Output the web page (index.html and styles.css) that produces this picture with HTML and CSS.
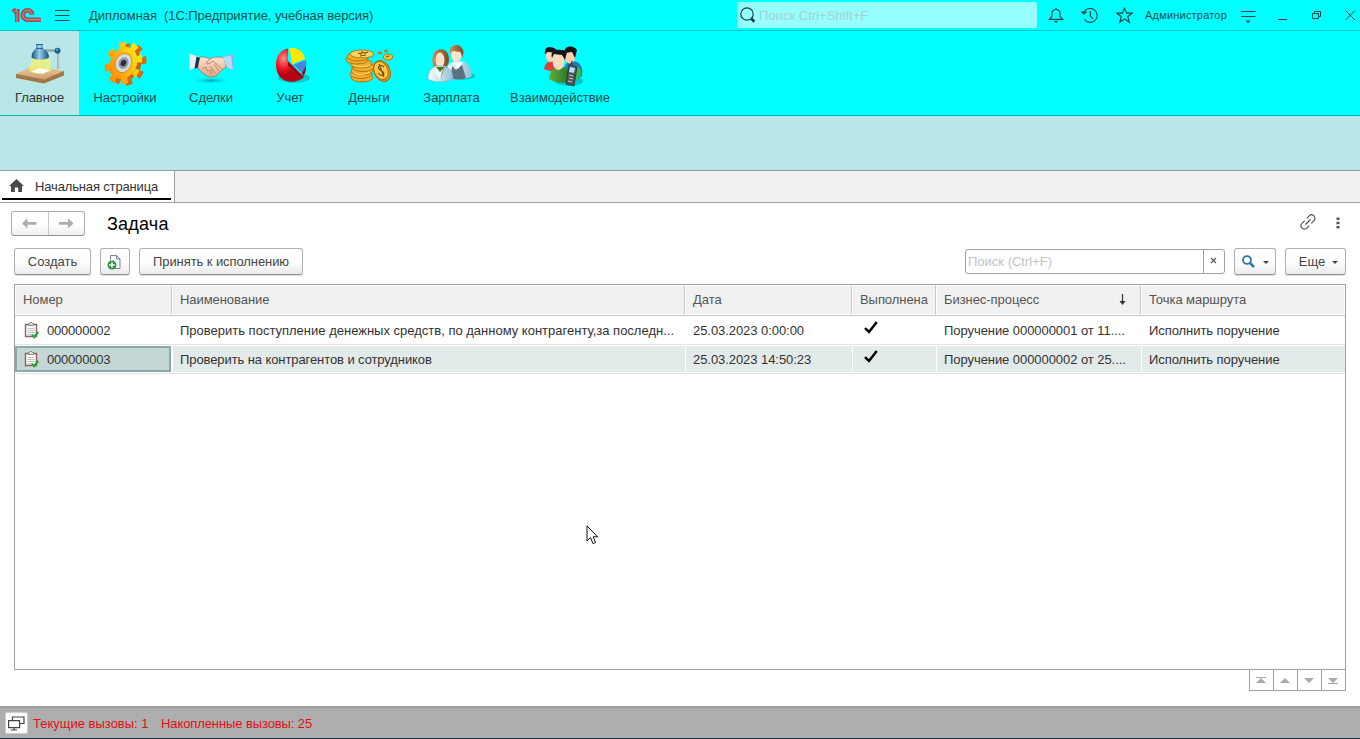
FILE: index.html
```html
<!DOCTYPE html>
<html lang="ru">
<head>
<meta charset="utf-8">
<title>Дипломная</title>
<link rel="stylesheet" href="styles.css">
</head>
<body>
<div class="app">
  <header class="titlebar">
    <svg class="logo" width="30" height="15" viewBox="0 0 30 15" fill="none">
      <g stroke="#b8464f" stroke-width="4.600"><path d="M.8 4 4.300 1.800M5.200 1V14"/><path d="M20.200 6.800A4.700 4.700 0 1 0 15.600 11.700H29"/></g>
      <g stroke="#6fc9c9" stroke-width=".8"><path d="M1.500 4.500 5 2V14"/><path d="M20.200 6.800A4.700 4.700 0 1 0 15.600 11.700H29"/></g>
    </svg>
    <svg class="burger" width="15" height="13" viewBox="0 0 15 13" stroke="#174b4b"><path d="M0 1.500h14.500M0 6.500h14.500M0 11.500h14.500"/></svg>
    <span class="app-title">Дипломная&nbsp; (1С:Предприятие, учебная версия)</span>
    <div class="global-search">
      <svg width="17" height="17" viewBox="0 0 17 17" fill="none" stroke="#173f3f"><circle cx="7" cy="7" r="6.200" stroke-width="1.200"/><path d="m11.200 11.500 3.200 3.200" stroke-width="2.800"/></svg>
      <span class="global-hint">Поиск Ctrl+Shift+F</span>
    </div>
    <svg class="t-bell" width="16" height="17" viewBox="0 0 16 17" fill="none" stroke="#174b4b" stroke-width="1.200"><path d="M8 1v1.500M1.400 12.300h13.200L12 9.200V6.500C12 3.900 10.300 2.500 8 2.500S4 3.900 4 6.500v2.700z"/><path d="M5.500 13.800h5L8 16z" fill="#174b4b" stroke="none"/></svg>
    <svg class="t-history" width="18" height="17" viewBox="0 0 18 17" fill="none" stroke="#174b4b" stroke-width="1.200"><path d="M2.600 6A7 7 0 1 1 3.400 12.300M9.300 4v5l2.700 2.800"/><path d="M1 5 2.800 7.200 5 5.200z" fill="#174b4b"/></svg>
    <svg class="t-star" width="17" height="17" viewBox="0 0 17 17" fill="none" stroke="#174b4b" stroke-width="1.200"><path d="m8.500 1.200 2.100 5h5.400l-4.300 3.500 1.700 5.600-4.900-3.300-4.900 3.300 1.700-5.600L1 6.200h5.400z"/></svg>
    <span class="user">Администратор</span>
    <svg class="t-menu" width="15" height="14" viewBox="0 0 15 14"><path d="M0 1.500h14.500M0 6.500h14.500" stroke="#174b4b"/><path d="M4.500 10.500h5L7 13.200z" fill="#174b4b"/></svg>
    <svg class="t-min" width="9" height="11" viewBox="0 0 9 11"><path d="M0 9.500h9" stroke="#174b4b"/></svg>
    <svg class="t-max" width="10" height="10" viewBox="0 0 10 10" fill="none" stroke="#174b4b"><path d="M.5 3.500h6v5h-6zM2.500 3.500v-2h6v5h-2"/></svg>
    <svg class="t-close" width="11" height="11" viewBox="0 0 11 11" fill="none" stroke="#174b4b"><path d="m.5.5 9.500 9.500M10 .5.500 10"/></svg>
  </header>

  <nav class="sections">
    <div class="section s-main">
      <svg width="48" height="48" viewBox="0 0 48 48">
        <defs>
          <linearGradient id="wood" x2="0" y2="1"><stop offset="0" stop-color="#e9cba0"/><stop offset="1" stop-color="#cf9f6b"/></linearGradient>
          <linearGradient id="shade"><stop offset="0" stop-color="#11507f"/><stop offset=".45" stop-color="#9cd0ea"/><stop offset="1" stop-color="#0f4d7c"/></linearGradient>
        </defs>
        <path d="M0 33v4l28 5.500 20-8v-4.500z" fill="#a37547"/>
        <path d="M0 33 17 25l31 5-20 8.500z" fill="url(#wood)"/>
        <path d="M16 17h18l1 13-14 3-8-3z" fill="#f7f26a" opacity=".7"/>
        <path d="m15 31 8-4 11 2-7 4z" fill="#fffff0"/>
        <path d="M42.500 11v17M28 9.500h13" stroke="#8ca5b0" stroke-width="2.400"/>
        <path d="M43 11v17" stroke="#fff" stroke-width=".8"/>
        <circle cx="41.500" cy="9.700" r="3" fill="#186596"/><circle cx="40.800" cy="8.800" r="1" fill="#72b6d9"/>
        <path d="M20 3.500h7v4c4 2 6 5 6 9-4 3-14 3-17.500 0 0-4 1.500-7 4.500-9z" fill="url(#shade)"/>
        <path d="M20 3.500h7M20 7.500h7" stroke="#276a94"/>
      </svg>
      <span>Главное</span>
    </div>
    <div class="section s-setup">
      <svg width="48" height="48" viewBox="0 0 48 48">
        <defs><linearGradient id="gear" x1="0" y1="1" x2=".7" y2="0"><stop offset="0" stop-color="#ff8300"/><stop offset=".5" stop-color="#ffad15"/><stop offset="1" stop-color="#ffe60a"/></linearGradient></defs>
        <g transform="translate(27 23.500) rotate(25) scale(.8 1)">
          <circle r="16" fill="#c96205"/><circle r="18" fill="none" stroke="#d96a05" stroke-width="8" pathLength="16" stroke-dasharray="1 1"/>
        </g>
        <g transform="translate(22.500 22) rotate(25) scale(.8 1)">
          <circle r="16.500" fill="url(#gear)"/><circle r="18.300" fill="none" stroke="url(#gear)" stroke-width="8" pathLength="16" stroke-dasharray="1 1"/>
          <circle r="10" fill="#d6d9de" stroke="#dd9220" stroke-width="1.300"/><circle r="6" fill="#929aa1"/><circle r="3.300" fill="#252f36"/>
        </g>
      </svg>
      <span>Настройки</span>
    </div>
    <div class="section s-deals">
      <svg width="48" height="48" viewBox="0 0 48 48">
        <defs>
          <linearGradient id="skin" x2="0" y2="1"><stop offset="0" stop-color="#ffe5d2"/><stop offset="1" stop-color="#dfa580"/></linearGradient>
          <radialGradient id="drop"><stop offset="0" stop-color="#007f91" stop-opacity=".7"/><stop offset="1" stop-color="#00d8df" stop-opacity="0"/></radialGradient>
        </defs>
        <ellipse cx="24" cy="39.500" rx="19" ry="3.500" fill="url(#drop)"/>
        <path d="M11 17c4-2 8-1 12 1 5-3 10-2 15-1l1 9-3 2-6 6c-5 4-11 1-13-1l-6-6z" fill="url(#skin)" stroke="#a8694f" stroke-width=".7"/>
        <path d="m23 18-4 4c1 2 5 0 7-2l9 8M27 23l5 7M23 25l5 7M15 28l4-2 1 4 4-1v4" fill="none" stroke="#af7156" stroke-width=".8"/>
        <path d="M2.500 12.500 12 16l-2 10-7.500 3z" fill="#e5eff5"/><path d="M9.500 15.500 13 17l-2.500 10-3 .500z" fill="#17384a"/>
        <path d="M46 12.500 36 16l3 10 7 3.500z" fill="#82b5e5"/><path d="m36 16 4 10 6 3-2-15z" fill="#b8d8f6"/>
      </svg>
      <span>Сделки</span>
    </div>
    <div class="section s-account">
      <svg width="48" height="48" viewBox="0 0 48 48">
        <defs><radialGradient id="redpie" cx=".3" cy=".3"><stop offset="0" stop-color="#ff8d84"/><stop offset=".6" stop-color="#f01725"/><stop offset="1" stop-color="#b70010"/></radialGradient></defs>
        <ellipse cx="28" cy="37" rx="16" ry="5" fill="#008b91" opacity=".45"/>
        <path d="M22 7.500V25l13 13c-9 6-25 3-25-14 0-9 5-15.500 12-16.500z" fill="url(#redpie)"/>
        <path d="M22 25v-5l16 16-3 2.500z" fill="#a30010"/>
        <path d="M23.500 7C31 5.500 38 11 39 18L26 23z" fill="#ffe800"/>
        <path d="m27.500 23.500 12.500-4.500c1 6 0 9-4 13z" fill="#4388dd"/><path d="m36 32 4-7c0 6-1 8-3 10z" fill="#a30014"/>
      </svg>
      <span>Учет</span>
    </div>
    <div class="section s-money">
      <svg width="48" height="48" viewBox="0 0 48 48">
        <g fill="#f5ae28" stroke="#a86c12" stroke-width=".9">
          <ellipse cx="17" cy="36.500" rx="11" ry="4.500"/><ellipse cx="16" cy="33" rx="11" ry="4.500"/><ellipse cx="17" cy="29.500" rx="11" ry="4.500"/><ellipse cx="18" cy="26" rx="11" ry="4.500"/><ellipse cx="16" cy="22.500" rx="11" ry="4.500"/><ellipse cx="12" cy="18.500" rx="11" ry="4.500"/><ellipse cx="13" cy="15.500" rx="11" ry="4.500"/><ellipse cx="17" cy="13" rx="12" ry="4" fill="#ffd45c"/>
          <ellipse cx="37" cy="30" rx="8" ry="11" transform="rotate(-25 37 30)" fill="#de911a"/><ellipse cx="36" cy="29.500" rx="6.700" ry="9.400" transform="rotate(-25 36 29.500)" fill="#ffc944"/>
          <ellipse cx="43" cy="16" rx="4.500" ry="3" fill="#ffc13a"/><ellipse cx="35" cy="12" rx="2" ry="1"/><ellipse cx="41" cy="10" rx="1.500" ry="1"/>
        </g>
        <path d="M39 26c-3-3-7-1-5 2l4 3c3 3-2 5-5 1M34 23l5 13M13 12l3 1 1-2 3 1 3-1m-8 4 6-1M41 16l3-1" fill="none" stroke="#795009" stroke-width="1.200"/>
        <path d="M9 24c5 3 11 2 16 0M8 31c5 4 11 3 17 0" fill="none" stroke="#ffe276"/>
      </svg>
      <span>Деньги</span>
    </div>
    <div class="section s-pay">
      <svg width="48" height="48" viewBox="0 0 48 48">
        <defs>
          <linearGradient id="coat"><stop offset="0" stop-color="#f7fcff"/><stop offset="1" stop-color="#91bfd5"/></linearGradient>
          <linearGradient id="hair"><stop offset="0" stop-color="#c98f55"/><stop offset="1" stop-color="#7c4925"/></linearGradient>
        </defs>
        <ellipse cx="31" cy="35" rx="16" ry="4" fill="#008f9d" opacity=".5"/>
        <g transform="translate(-3 2)"><path d="M21 34c0-10 3-14 8-16h7c7 1 10 6 11 15-6 4-19 5-26 1z" fill="url(#coat)"/><path d="m27 23 4 4 6-5 4 13c-5 2-10 2-15 0z" fill="#5c7282"/><path d="m29 20 4 6 5-7" fill="#fff"/>
        <ellipse cx="31.500" cy="11.500" rx="5.500" ry="7" fill="#ffe3ca"/><path d="M25 11c-2-11 12-12 13.500-2l-1 6-2-6-8-1z" fill="url(#hair)"/></g>
        <g transform="translate(-2 2)"><path d="M7 22C3 4 19 3 22 11c2 5 1 12-4 15H8z" fill="url(#hair)"/><ellipse cx="14" cy="17" rx="4.500" ry="7.500" fill="#ffe1c7"/>
        <path d="M2 36c0-8 3-11 8-13h8c6 2 9 6 9 13-6 4-19 4-25 0z" fill="url(#coat)" stroke="#75abc4" stroke-width=".6"/><path d="m10 24 4 12 5-12z" fill="#52772b"/><path d="m10 24-2 5 6 8 2-8 3-5-5 5z" fill="#edf8fb"/></g>
      </svg>
      <span>Зарплата</span>
    </div>
    <div class="section s-inter">
      <svg width="48" height="48" viewBox="0 0 48 48">
        <defs><linearGradient id="green" x2="1"><stop offset="0" stop-color="#65ae44"/><stop offset="1" stop-color="#1e6f21"/></linearGradient></defs>
        <g transform="translate(1 1)"><ellipse cx="30" cy="39" rx="14" ry="5" fill="#008f9d" opacity=".5"/>
        <path d="M5 27c1-6 4-8 10-8l7 7v2c-5 2-11 2-17-1z" fill="#d4443d"/><path d="M25 27c2-8 6-10 13-7 5 3 6 8 5 14-3 4-9 3-13 1z" fill="#2679ba"/><path d="M36 25c7-2 8 8 4 12l-5 1z" fill="#3ab358"/>
        <ellipse cx="11.500" cy="13.500" rx="4.500" ry="6.500" fill="#ffd6b8"/><path d="M6 12c-1-7 4-9 11-5l1 4-9-1z" fill="#17171c"/>
        <ellipse cx="31" cy="14" rx="5.500" ry="7.500" fill="#ffd1af"/><path d="M25 11c0-8 10-8 13-3l-2 8-3-6z" fill="#131317"/>
        <path d="M10 37c1-9 5-12 11-12 8 0 13 4 11 14-6 3-17 2-22-2z" fill="url(#green)"/><ellipse cx="19.500" cy="19" rx="6" ry="9" fill="#ffd9bb"/><path d="M13 16C10 7 22 6 28 10l-2 8-3-5-8-1z" fill="#151519"/>
        <path d="m32 22 1-3v4l5 2-3 19-8-2 3-19z" fill="#4d5358" stroke="#242a2d" stroke-width=".7"/><path d="m31 25 5 1-1 5-5-1z" fill="#a9e7fa"/><path d="m30 33 4 1m-4 2 4 1m-5 2 4 1" stroke="#ccd1d4"/></g>
      </svg>
      <span>Взаимодействие</span>
    </div>
  </nav>
  <div class="commands-band"></div>

  <div class="tabs">
    <div class="tab">
      <svg width="15" height="13" viewBox="0 0 15 13" fill="#4a4a4a"><path d="M7.500 0 15 7h-2v6H9.200V8.500H5.800V13H2V7H0z"/></svg>
      <span>Начальная страница</span>
    </div>
  </div>

  <main class="form">
    <div class="form-head">
      <div class="history">
        <div><svg width="15" height="11" viewBox="0 0 15 11" fill="#adadad"><path d="M0 5.500 5.500.3v3.800H14.500v2.600H5.500v3.800z"/></svg></div>
        <div><svg width="15" height="11" viewBox="0 0 15 11" fill="#adadad"><path d="M14.500 5.500 9 .3v3.800H0v2.600h9v3.800z"/></svg></div>
      </div>
      <h1>Задача</h1>
      <svg class="link" width="16" height="16" viewBox="0 0 16 16" fill="none" stroke="#4d4d4d" stroke-width="1.100"><path d="m6.800 4.300 2.400-2.400a3.300 3.300 0 0 1 4.800 4.700L11.300 9.300M9.200 11.700l-2.400 2.400a3.300 3.300 0 0 1-4.800-4.700L4.700 6.700M5.500 10.500l5-5"/></svg>
      <svg class="dots" width="4" height="12" viewBox="0 0 4 12" fill="#555"><path d="M.5.500h3v2.600h-3zM.5 4.700h3v2.600h-3zM.5 8.900h3v2.600h-3z"/></svg>
    </div>

    <div class="toolbar">
      <div class="btn b-create">Создать</div>
      <div class="btn b-copy"><svg width="16" height="16" viewBox="0 0 16 16"><path d="M3.500 6V1.500h6l3.500 3.500v9.500H7" fill="#fff" stroke="#71849a"/><path d="M9.500 1.500V5H13" fill="none" stroke="#71849a"/><circle cx="5" cy="11" r="4.500" fill="#2e9442"/><path d="M2.200 11h5.600M5 8.200v5.600" stroke="#fff" stroke-width="1.500"/></svg></div>
      <div class="btn b-accept">Принять к исполнению</div>
      <div class="search">
        <span class="search-hint">Поиск (Ctrl+F)</span>
        <div class="clear"><svg width="7" height="7" viewBox="0 0 7 7" stroke="#555" stroke-width="1.100"><path d="m1 1 5 5M6 1 1 6"/></svg></div>
      </div>
      <div class="btn b-find">
        <svg width="13" height="13" viewBox="0 0 13 13" fill="none" stroke="#3277aa"><circle cx="5" cy="5" r="3.900" stroke-width="1.900"/><path d="m8 8 4 4" stroke-width="2.500"/></svg>
        <svg width="6" height="3" viewBox="0 0 6 3" fill="#444"><path d="M0 0h6L3 3z"/></svg>
      </div>
      <div class="btn b-more"><span>Еще</span><svg width="6" height="3" viewBox="0 0 6 3" fill="#444"><path d="M0 0h6L3 3z"/></svg></div>
    </div>

    <div class="table">
      <div class="row head">
        <div>Номер</div><div>Наименование</div><div>Дата</div><div>Выполнена</div>
        <div class="sorted"><span>Бизнес-процесс</span><svg width="7" height="11" viewBox="0 0 7 11"><path d="M3.500 0v9" stroke="#333" stroke-width="1.200"/><path d="M.5 7h6l-3 4z" fill="#333"/></svg></div>
        <div>Точка маршрута</div>
      </div>
      <div class="row">
        <div class="num"><svg width="15" height="17" viewBox="0 0 15 17"><path d="M1.500 2.500h11v12h-11z" fill="#fff" stroke="#8c6457" stroke-width="1.400"/><path d="M4.500 3.500v-2h1l.500-1h2l.500 1h1v2z" fill="#ddd" stroke="#777" stroke-width=".8"/><path d="M3.500 6.500h7m-7 2h7m-7 2h7m-7 2h4" stroke="#b9c3cb"/><path d="m7.800 12.700 2.400 2.300 4-5" fill="none" stroke="#25a63c" stroke-width="2.200"/></svg><span>000000002</span></div>
        <div><span class="name-long">Проверить поступление денежных средств, по данному контрагенту,за последн...</span></div>
        <div>25.03.2023 0:00:00</div>
        <div class="done"><svg width="14" height="13" viewBox="0 0 14 13"><path d="M1 7.200 5 11l7.800-10" fill="none" stroke="#000" stroke-width="2.500"/></svg></div>
        <div>Поручение 000000001 от 11....</div>
        <div>Исполнить поручение</div>
      </div>
      <div class="row selected">
        <div class="num"><svg width="15" height="17" viewBox="0 0 15 17"><path d="M1.500 2.500h11v12h-11z" fill="#fff" stroke="#8c6457" stroke-width="1.400"/><path d="M4.500 3.500v-2h1l.500-1h2l.500 1h1v2z" fill="#ddd" stroke="#777" stroke-width=".8"/><path d="M3.500 6.500h7m-7 2h7m-7 2h7m-7 2h4" stroke="#b9c3cb"/><path d="m7.800 12.700 2.400 2.300 4-5" fill="none" stroke="#25a63c" stroke-width="2.200"/></svg><span>000000003</span></div>
        <div><span class="name-short">Проверить на контрагентов и сотрудников</span></div>
        <div>25.03.2023 14:50:23</div>
        <div class="done"><svg width="14" height="13" viewBox="0 0 14 13"><path d="M1 7.200 5 11l7.800-10" fill="none" stroke="#000" stroke-width="2.500"/></svg></div>
        <div>Поручение 000000002 от 25....</div>
        <div>Исполнить поручение</div>
      </div>
    </div>
    <div class="pager">
      <div><svg width="10" height="7" viewBox="0 0 10 7" fill="#a8a8a8"><path d="M0 0h10v1H0zM5 1l5 5H0z"/></svg></div>
      <div><svg width="10" height="7" viewBox="0 0 10 7" fill="#a8a8a8"><path d="m5 1 5 5H0z"/></svg></div>
      <div><svg width="10" height="7" viewBox="0 0 10 7" fill="#a8a8a8"><path d="M0 1h10L5 6z"/></svg></div>
      <div><svg width="10" height="7" viewBox="0 0 10 7" fill="#a8a8a8"><path d="M0 1h10L5 6zM0 6h10v1H0z"/></svg></div>
    </div>
  </main>

  <footer class="status">
    <div class="windows"><svg width="17" height="15" viewBox="0 0 17 15" fill="none" stroke="#444" stroke-width="1.200"><path d="M4.500 4.500V1h11.500v6.500h-4M.6 4.600h11v7H.6zM6 11.600V14M3 14h6"/></svg></div>
    <span class="calls-now">Текущие вызовы: 1</span>
    <span class="calls-total">Накопленные вызовы: 25</span>
  </footer>
  <svg class="cursor" width="13" height="20" viewBox="0 0 13 20"><path d="M1 .9V16l3.500-3.400 2.500 6 2.600-1.100-2.500-5.700h4.500z" fill="#fff" stroke="#111"/></svg>
</div>
</body>
</html>
```
FILE: styles.css
```css
* { box-sizing: border-box; }
body { margin: 0; font: 13px/16px "Liberation Sans", Arial, sans-serif; color: #333; }
svg { display: block; flex: none; }
span, .btn, .row > div { white-space: nowrap; }
.app { position: relative; width: 1360px; height: 739px; display: flex; flex-direction: column; overflow: hidden; background: #fff; }
.titlebar { height: 31px; flex: none; display: flex; align-items: center; background: #00ffff; border-bottom: 1px solid #05c4c4; padding-left: 12px; color: #1b4c4c; }
.burger { margin: 1px 0 0 13px; }
.app-title { margin: 2px 0 0 19px; width: 648px; letter-spacing: -.06px; }
.global-search { width: 300px; height: 26px; display: flex; align-items: center; padding-left: 3px; background: #96ffff; border-radius: 2px; }
.global-hint { margin: 2px 0 0 2px; color: #a9cfcf; letter-spacing: .02px; }
.t-bell { margin-left: 11px; }
.t-history { margin-left: 17px; }
.t-star { margin-left: 17px; }
.user { margin-left: 12px; width: 84px; font-size: 11px; letter-spacing: .2px; }
.t-menu { margin-left: 12px; margin-top: 3px; }
.t-min { margin-left: 22px; }
.t-max { margin-left: 25px; }
.t-close { margin-left: 23px; }

.sections { height: 85px; flex: none; display: flex; background: #00ffff; border-bottom: 1px solid #08adb0; }
.section { height: 84px; padding-top: 10px; display: flex; flex-direction: column; align-items: center; color: #24484b; }
.section span { margin-top: 1px; letter-spacing: -.08px; }
.s-main { width: 79px; background: #b9e6e6; color: #333; }
.s-setup { width: 92px; }
.s-deals { width: 80px; }
.s-account { width: 78px; }
.s-money { width: 80px; }
.s-pay { width: 85px; }
.s-inter { width: 132px; }
.s-inter svg { margin-left: 4px; }
.commands-band { height: 54px; flex: none; background: #b9e6e6; }

.tabs { height: 33px; flex: none; background: #f0f0f0; border-top: 1px solid #999; border-bottom: 1px solid #a0a0a0; }
.tab { width: 175px; height: 31px; padding-left: 9px; background: linear-gradient(#000, #000) 2px 27px / 169px 2px no-repeat #fff; border-right: 1px solid #a0a0a0; display: flex; align-items: center; }
.tab svg { margin-top: -3px; }
.tab span { margin-left: 11px; letter-spacing: -.15px; }

.form { height: 503px; flex: none; padding: 0 14px; }
.form-head { height: 41px; display: flex; align-items: center; }
.history { width: 74px; height: 25px; margin-left: -3px; display: flex; border: 1px solid #adadad; border-bottom-color: #929292; border-radius: 3px; background: linear-gradient(#fff 55%, #eee); }
.history div { flex: 1; display: flex; align-items: center; justify-content: center; }
.history div + div { border-left: 1px solid #c9c9c9; }
h1 { margin: 0 0 0 22px; font-size: 18px; line-height: 22px; font-weight: 400; letter-spacing: .2px; color: #000; }
.link { margin: -3px 0 0 auto; }
.dots { margin: -2px 6px 0 20px; }
.toolbar { height: 40px; display: flex; align-items: flex-start; padding-top: 4px; }
.btn { height: 27px; display: flex; align-items: center; justify-content: center; border: 1px solid #b0b0b0; border-bottom-color: #949494; border-radius: 3px; background: linear-gradient(#fff 50%, #ebebeb); color: #444; box-shadow: 0 1px 0 #ddd; }
.b-create { width: 77px; }
.b-copy { width: 30px; margin-left: 9px; }
.b-accept { width: 164px; margin-left: 9px; letter-spacing: -.08px; }
.search { width: 260px; height: 25px; margin: 1px 0 0 auto; display: flex; align-items: center; border: 1px solid #a0a0a0; border-radius: 3px; }
.search-hint { padding-left: 2px; color: #c3c3c3; }
.clear { width: 21px; height: 23px; margin-left: auto; padding: 0 2px 2px 0; border-left: 1px solid #a0a0a0; display: flex; align-items: center; justify-content: center; }
.b-find { width: 42px; margin-left: 9px; gap: 8px; }
.b-find svg + svg, .b-more svg { margin-top: 2px; }
.b-more { width: 61px; margin-left: 9px; padding-left: 6px; gap: 7px; }

.table { width: 1332px; height: 386px; border: 1px solid #a0a0a0; }
.row { display: grid; grid-template-columns: 157px 513px 167px 84px 205px 204px; height: 29px; border-bottom: 1px solid #e4e4e4; letter-spacing: -.06px; }
.row > div { display: flex; align-items: center; padding: 1px 0 0 7px; border-left: 1px solid #fff; overflow: hidden; }
.row > div:first-child { border-left: 0; }
.head { height: 31px; border-bottom-color: #c8c8c8; color: #555; }
.head > div { background: #f1f1f1; padding-top: 0; border: 1px solid #fff; }
.head > div:not(:last-child) { border-right-color: #c8c8c8; }
.head > div:first-child { border-left: 1px solid #fff; }
.sorted svg { margin: -1px 14px 0 auto; }
.name-long { letter-spacing: 0; }
.name-short { letter-spacing: -.09px; }
.row > .num { padding-left: 9px; }
.num svg { margin-top: -1px; }
.num span { margin-left: 8px; letter-spacing: -.2px; }
.row > .done { padding: 0 0 5px 11px; }
.selected > div { background: #e2eaea; border-top: 1px solid #fff; border-bottom: 1px solid #fff; }
.selected > .num { background: #c5d7d5; border: 2px solid #8aa9a7; padding-left: 7px; margin: 1px 1px 1px 0; }
.selected > .num:first-child { border-left: 2px solid #8aa9a7; }
.pager { display: flex; justify-content: flex-end; }
.pager div { width: 24px; height: 22px; margin-top: -1px; padding-right: 1px; border: 1px solid #a0a0a0; border-right: 0; display: flex; align-items: center; justify-content: center; }
.pager div:last-child { width: 25px; border-right: 1px solid #a0a0a0; }
.status { height: 33px; flex: none; background: #aeaeae; border-top: 2px solid #9d9d9d; border-bottom: 1px solid #17324a; display: flex; align-items: center; color: #e01018; }
.status span { padding-top: 2px; }
.windows { width: 23px; height: 22px; margin-left: 5px; background: #fff; border: 1px solid #ccc; border-radius: 2px; display: flex; align-items: center; justify-content: center; }
.calls-now { margin-left: 5px; width: 128px; }
.calls-total { letter-spacing: -.1px; }
.cursor { position: absolute; left: 586px; top: 525px; }
```
